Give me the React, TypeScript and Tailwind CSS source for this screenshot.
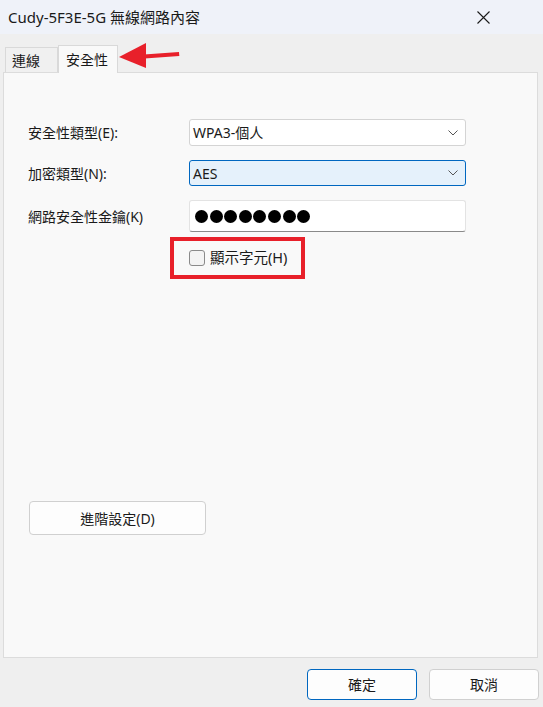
import React from "react";

const font = { fontFamily: '"Noto Sans", "Noto Sans CJK TC", sans-serif' };

function Chevron() {
  return (
    <svg width="10" height="6" viewBox="0 0 10 6" className="mr-[5px]">
      <path d="M0.5 0.5 L5 5 L9.5 0.5" fill="none" stroke="#555" strokeWidth="1" />
    </svg>
  );
}

function Select({ value, focused }: { value: string; focused?: boolean }) {
  return (
    <div
      className={
        focused
          ? "flex h-[26px] w-[277px] items-center justify-between rounded-[3px] border border-[#0067c0] bg-[#e5f1fb] pl-[3px] pr-[2px]"
          : "flex h-[27px] w-[277px] items-center justify-between rounded-[3px] border border-[#d4d4d4] bg-white pl-[3px] pr-[2px]"
      }
    >
      <span className="text-[14px] text-[#1a1a1a]">{value}</span>
      <Chevron />
    </div>
  );
}

export default function App() {
  return (
    <div className="relative flex h-[707px] w-[543px] flex-col bg-[#efefef] text-[#1a1a1a]" style={font}>
      {/* title bar */}
      <div className="flex h-[34px] items-center justify-between bg-[#eff2f9] pl-[8px] pr-[53px]">
        <span className="text-[15px] leading-none">Cudy-5F3E-5G 無線網路內容</span>
        <svg width="13" height="13" viewBox="0 0 13 13">
          <path d="M0.5 0.5 L12.5 12.5 M12.5 0.5 L0.5 12.5" stroke="#1a1a1a" strokeWidth="1.1" />
        </svg>
      </div>

      {/* tabs */}
      <div className="mt-[11px] flex items-end pl-[5px]">
        <div className="flex h-[25px] w-[53px] items-center border border-b-0 border-[#d9d9d9] bg-[#f0f0f0] pl-[6px] text-[14px]">
          連線
        </div>
        <div className="relative z-10 -mb-px flex h-[28px] w-[60px] items-center border border-b-0 border-[#d9d9d9] bg-[#f9f9f9] pl-[7px] text-[14px]">
          安全性
        </div>
      </div>

      {/* panel */}
      <div className="ml-[3px] flex h-[586px] w-[535px] flex-col border border-[#dcdcdc] bg-[#f9f9f9] pl-[24px]">
        <div className="mt-[46px] grid grid-cols-[161px_277px] items-center gap-y-[14px]">
          <span className="text-[14px]">安全性類型(E):</span>
          <Select value="WPA3-個人" />
          <span className="text-[14px]">加密類型(N):</span>
          <Select value="AES" focused />
          <span className="text-[14px]">網路安全性金鑰(K)</span>
          <div className="flex h-[32px] items-center gap-[1.6px] rounded-[3px] border-b border-b-[#8a8a8a] border-x border-t border-[#e3e3e3] bg-white pl-[5px]">
            {[0, 1, 2, 3, 4, 5, 6, 7].map((i) => (
              <span key={i} className="h-[13px] w-[13px] rounded-full bg-black" />
            ))}
          </div>
        </div>

        <div className="ml-[142px] mt-[5px] flex h-[42px] w-[135px] items-center border-[4px] border-[#e8202a] pl-[15px]">
          <span className="h-[16px] w-[16px] rounded-[3px] border border-[#8a8a8a] bg-[#f3f3f3]" />
          <span className="ml-[5px] text-[14.5px]">顯示字元(H)</span>
        </div>

        <button className="ml-[1px] mt-[222px] flex h-[34px] w-[177px] items-center justify-center rounded-[4px] border border-[#d0d0d0] bg-[#fdfdfd] text-[14px]">
          進階設定(D)
        </button>
      </div>

      {/* footer */}
      <div className="mt-[11px] flex justify-end gap-[12px] pr-[4px]">
        <button className="flex h-[31px] w-[110px] items-center justify-center rounded-[4px] border border-[#0067c0] bg-[#fdfdfd] text-[14px]">
          確定
        </button>
        <button className="flex h-[31px] w-[110px] items-center justify-center rounded-[4px] border border-[#d0d0d0] bg-[#fdfdfd] text-[14px]">
          取消
        </button>
      </div>

      {/* red annotation arrow */}
      <svg className="absolute left-[116px] top-[40px]" width="68" height="32" viewBox="0 0 68 32">
        <path d="M28 14.5 L63 12 L63.3 16 L28.5 18.5 Z" fill="#e8202a" />
        <path d="M3 17 L30 3 L30 28 Z" fill="#e8202a" />
      </svg>
    </div>
  );
}
